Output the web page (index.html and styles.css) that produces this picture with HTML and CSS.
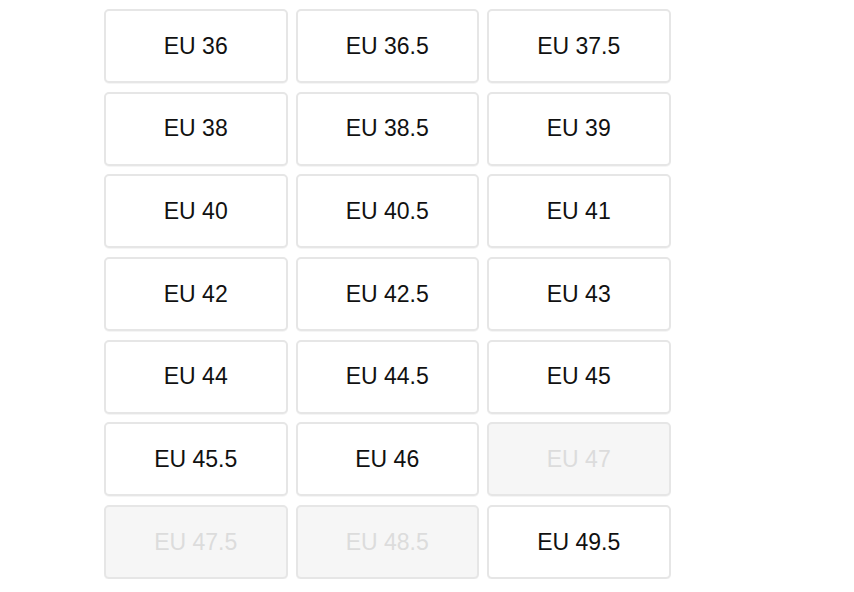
FILE: index.html
```html
<!DOCTYPE html>
<html lang="en">
<head>
    <meta charset="UTF-8">
    <meta name="viewport" content="width=device-width, initial-scale=1.0">
    <title>Size Picker</title>
    <link rel="stylesheet" href="styles.css">
</head>
<body>
    <div class="size-grid">
        <button class="size">EU 36</button>
        <button class="size">EU 36.5</button>
        <button class="size">EU 37.5</button>
        <button class="size">EU 38</button>
        <button class="size">EU 38.5</button>
        <button class="size">EU 39</button>
        <button class="size">EU 40</button>
        <button class="size">EU 40.5</button>
        <button class="size">EU 41</button>
        <button class="size">EU 42</button>
        <button class="size">EU 42.5</button>
        <button class="size">EU 43</button>
        <button class="size">EU 44</button>
        <button class="size">EU 44.5</button>
        <button class="size">EU 45</button>
        <button class="size">EU 45.5</button>
        <button class="size">EU 46</button>
        <button class="size disabled" disabled>EU 47</button>
        <button class="size disabled" disabled>EU 47.5</button>
        <button class="size disabled" disabled>EU 48.5</button>
        <button class="size">EU 49.5</button>
    </div>
</body>
</html>
```

FILE: styles.css
```css
* {
    box-sizing: border-box;
    margin: 0;
    padding: 0;
}

body {
    background-color: #fff;
    font-family: 'Liberation Sans', Arial, sans-serif;
    padding: 9px 0 0 104px;
}

.size-grid {
    display: grid;
    grid-template-columns: repeat(3, 183.5px);
    grid-auto-rows: 74px;
    column-gap: 8px;
    row-gap: 8.7px;
}

.size {
    background-color: #fff;
    border: 2px solid #e6e6e6;
    border-radius: 5px;
    box-shadow: 0 1px 0 rgba(0, 0, 0, 0.04);
    color: #111;
    font-family: inherit;
    font-size: 23px;
    cursor: pointer;
}

.size.disabled {
    background-color: #f6f6f6;
    color: #dcdcdc;
    cursor: default;
}
```
